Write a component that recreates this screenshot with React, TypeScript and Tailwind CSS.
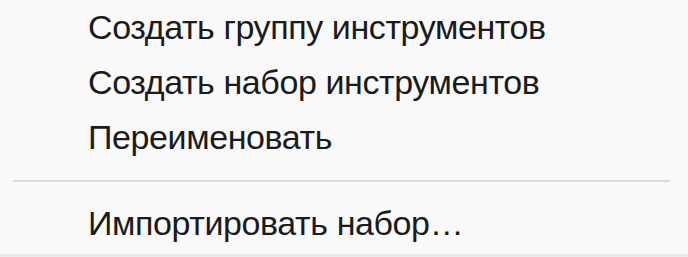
const items = ["Создать группу инструментов", "Создать набор инструментов", "Переименовать"];

function MenuItem({ label }: { label: string }) {
  return (
    <div className="h-[55px] pl-[88px] text-[34px] leading-[55px] tracking-[-0.4px] text-[#1b1b1b] whitespace-nowrap cursor-default">
      {label}
    </div>
  );
}

export default function App() {
  return (
    <div
      className="w-[688px] h-[257px] bg-[#f9f9f9] flex flex-col overflow-hidden"
      style={{ fontFamily: '"Liberation Sans", Arial, sans-serif' }}
    >
      {items.map((label) => (
        <MenuItem key={label} label={label} />
      ))}
      <div className="ml-[13px] mr-[18px] mt-[15px] mb-[14px] h-[2px] bg-[#dcdcdc]" />
      <MenuItem label="Импортировать набор…" />
      <div className="mt-auto h-[3px] bg-[#ececec]" />
    </div>
  );
}
